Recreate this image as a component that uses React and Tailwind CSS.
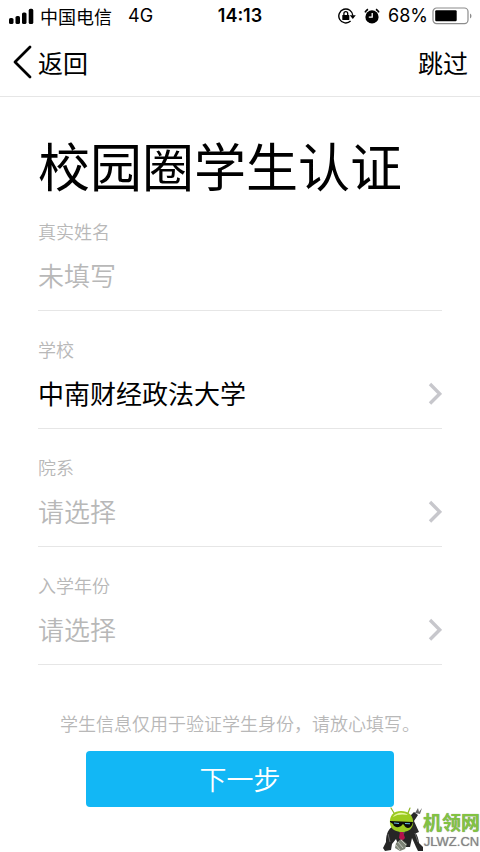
import React, { useState } from 'react';

const colleges = ['金融学院', '法学院', '会计学院', '工商管理学院'];
const years = ['2014', '2015', '2016', '2017'];

const StatusBar = () => (
    <div className="grid grid-cols-3 items-center h-[31px] px-2 text-lg leading-6">
        <div className="flex items-center gap-1.5">
            <svg viewBox="0 0 26 16" className="w-[26px] h-4 shrink-0" fill="currentColor">
                <rect x="1" y="10" width="4.5" height="6" rx="1.6" />
                <rect x="7.5" y="8" width="4.5" height="8" rx="1.6" />
                <rect x="14" y="4.5" width="4.5" height="11.5" rx="1.6" />
                <rect x="20.7" y="0.8" width="4.6" height="15.2" rx="1.6" />
            </svg>
            <span className="whitespace-nowrap">中国电信</span>
            <span className="ml-2.5 font-[Inter]">4G</span>
        </div>
        <span className="text-center font-semibold font-[Inter]">14:13</span>
        <div className="flex items-center justify-end gap-1">
            <svg viewBox="0 0 18 16" className="w-[18px] h-4 mr-1 shrink-0" fill="none" stroke="currentColor">
                <path d="M12.6 13.1A7 7 0 1 1 14.8 7.6" strokeWidth="1.4" />
                <path d="M11.8 7.2h6l-3 3.8z" fill="currentColor" stroke="none" />
                <rect x="4.3" y="7" width="7" height="5" rx="0.6" fill="currentColor" stroke="none" />
                <path d="M5.9 7.5V5.6a1.9 1.9 0 0 1 3.8 0v1.9" strokeWidth="1.3" />
            </svg>
            <svg viewBox="0 0 16 16" className="w-4 h-4 mr-1 shrink-0" fill="none" stroke="currentColor">
                <circle cx="8" cy="8.9" r="6.6" fill="currentColor" stroke="none" />
                <path d="M1 4.4A9 9 0 0 1 4 1.3M15 4.4a9 9 0 0 0-3-3.1" strokeWidth="1.6" />
                <path d="M8.2 5v4.2H4.8" stroke="white" strokeWidth="1.3" />
            </svg>
            <span className="font-[Inter]">68%</span>
            <svg viewBox="0 0 40 18" className="w-10 h-[18px] shrink-0">
                <rect x="1" y="1" width="35" height="15.6" rx="3.6" fill="none" stroke="#8c8c8c" strokeWidth="1.2" />
                <rect x="3.2" y="3.3" width="21.5" height="11" rx="1.2" fill="black" />
                <path d="M38 6.4c2 1 2 4 0 5z" fill="#8c8c8c" />
            </svg>
        </div>
    </div>
);

const NavBar = () => (
    <header className="flex items-center justify-between h-[66px] px-3 pb-1 text-[25px] leading-8 border-b border-[#e6e6e6]">
        <button type="button" className="flex items-center gap-1.5">
            <svg viewBox="0 0 20 34" className="w-5 h-[34px]" fill="none" stroke="currentColor" strokeWidth="2.8" strokeLinecap="round" strokeLinejoin="round">
                <path d="M18 2 3 17l15 15" />
            </svg>
            返回
        </button>
        <button type="button">跳过</button>
    </header>
);

const SelectField = ({ id, label, options, value, onChange }) => (
    <div className="flex flex-col gap-3.5 pt-5 pb-[17px] border-b border-[#e6e6e6]">
        <label htmlFor={id} className="text-lg leading-6 font-[350] text-[#b8b8b8]">{label}</label>
        <div className="flex items-center h-9">
            <select
                id={id}
                value={value}
                onChange={(e) => onChange(e.target.value)}
                className={`flex-1 min-w-0 appearance-none bg-transparent outline-none text-[26px] leading-9 ${
                    value ? 'text-black' : 'font-[350] text-[#b8b8b8]'
                }`}
            >
                <option value="">请选择</option>
                {options.map((option) => (
                    <option key={option} value={option}>{option}</option>
                ))}
            </select>
            <svg viewBox="0 0 14 24" className="w-3.5 h-6 shrink-0 text-[#c7c7cc]" fill="none" stroke="currentColor" strokeWidth="3.4">
                <path d="M2 3l9.7 9.8L2 22.5" />
            </svg>
        </div>
    </div>
);

const Watermark = () => (
    <div className="absolute right-0 bottom-0 flex items-end">
        <svg viewBox="0 0 40 46" className="w-10 h-[46px]">
            <path d="M24 13 31 6l4 3-4 6 5 11-5 2-6-9z" fill="#2a2a2a" />
            <path d="M32 7l3-5 1 4 3-4-2 6z" fill="#666" />
            <path d="M9 21C4 24 3 31 3 36l-3 6 2 3 6-1 1-6 4-5 3 8h11l2-9 4 9 2 4h5l1-3-5-5c-1-8-4-12-9-16z" fill="#262626" />
            <path d="M5 28l2 8M32 27l3 9" stroke="#777" strokeWidth="0.8" />
            <path d="M14 23h9l-3 8z" fill="#555" />
            <path d="M16 23h5l-1 3 2 6-3 3-3-3 1-6z" fill="#b5124c" />
            <path d="M7 18C6 9 11 5 18 5s13 4 12 13c-1 6-6 8-11 8S8 24 7 18z" fill="#9ccb1f" />
            <path d="M10 11c2-4 10-6 15-2-5-1-11-1-15 2z" fill="#e6f6a0" />
            <path d="M11 7 8 2M25 7l2-5" stroke="#8eb524" strokeWidth="1.2" strokeLinecap="round" />
            <path d="M7 15l23 1-1 3c-2 4-6 4-8 0l-1-1-1 1c-2 3-8 3-9-1l-3-2z" fill="#0b0b0b" />
            <path d="M11 17l5 .5M22 17.5l5 .3" stroke="#68bde0" strokeWidth="1.1" />
            <path d="M13 37l5-4 6 5-2 5-5 2-5-3z" fill="#7d8376" />
            <path d="M15 36l5 6M18 34l5 5M13 39l4 5" stroke="#d2d6cb" strokeWidth="0.8" />
        </svg>
        <div className="flex flex-col items-center pb-0.5">
            <span className="text-[19px] leading-6 font-bold text-[#82c341] [text-shadow:0_0_1px_#888]">机领网</span>
            <span className="text-[13px] leading-4 text-[#858585] font-[Liberation_Sans] [text-shadow:0_0_1px_#999]">JLWZ.CN</span>
        </div>
    </div>
);

const App = () => {
    const [name, setName] = useState('');
    const [school, setSchool] = useState('中南财经政法大学');
    const [college, setCollege] = useState('');
    const [year, setYear] = useState('');

    return (
        <div className="relative min-h-screen bg-white text-black font-['Noto_Sans_CJK_SC',sans-serif]">
            <StatusBar />
            <NavBar />

            <main className="px-[38px] pt-9 pb-11">
                <h1 className="mb-0.5 text-[52px] leading-[64px] whitespace-nowrap">校园圈学生认证</h1>

                <form className="flex flex-col gap-1.5" onSubmit={(e) => e.preventDefault()}>
                    <div className="flex flex-col gap-3.5 pt-5 pb-[17px] border-b border-[#e6e6e6]">
                        <label htmlFor="name" className="text-lg leading-6 font-[350] text-[#b8b8b8]">真实姓名</label>
                        <input
                            id="name"
                            type="text"
                            value={name}
                            onChange={(e) => setName(e.target.value)}
                            placeholder="未填写"
                            className="w-full h-9 text-[26px] leading-9 outline-none placeholder:font-[350] placeholder:text-[#b8b8b8]"
                        />
                    </div>
                    <SelectField id="school" label="学校" options={['中南财经政法大学']} value={school} onChange={setSchool} />
                    <SelectField id="college" label="院系" options={colleges} value={college} onChange={setCollege} />
                    <SelectField id="year" label="入学年份" options={years} value={year} onChange={setYear} />

                    <p className="mt-10 text-lg leading-6 font-[350] text-center whitespace-nowrap text-[#b8b8b8]">
                        学生信息仅用于验证学生身份，请放心填写。
                    </p>
                    <button type="submit" className="mt-2.5 mx-12 h-14 rounded text-[27px] font-[350] text-white bg-[#12b7f5]">
                        下一步
                    </button>
                </form>
            </main>

            <Watermark />
        </div>
    );
};

export default App;
